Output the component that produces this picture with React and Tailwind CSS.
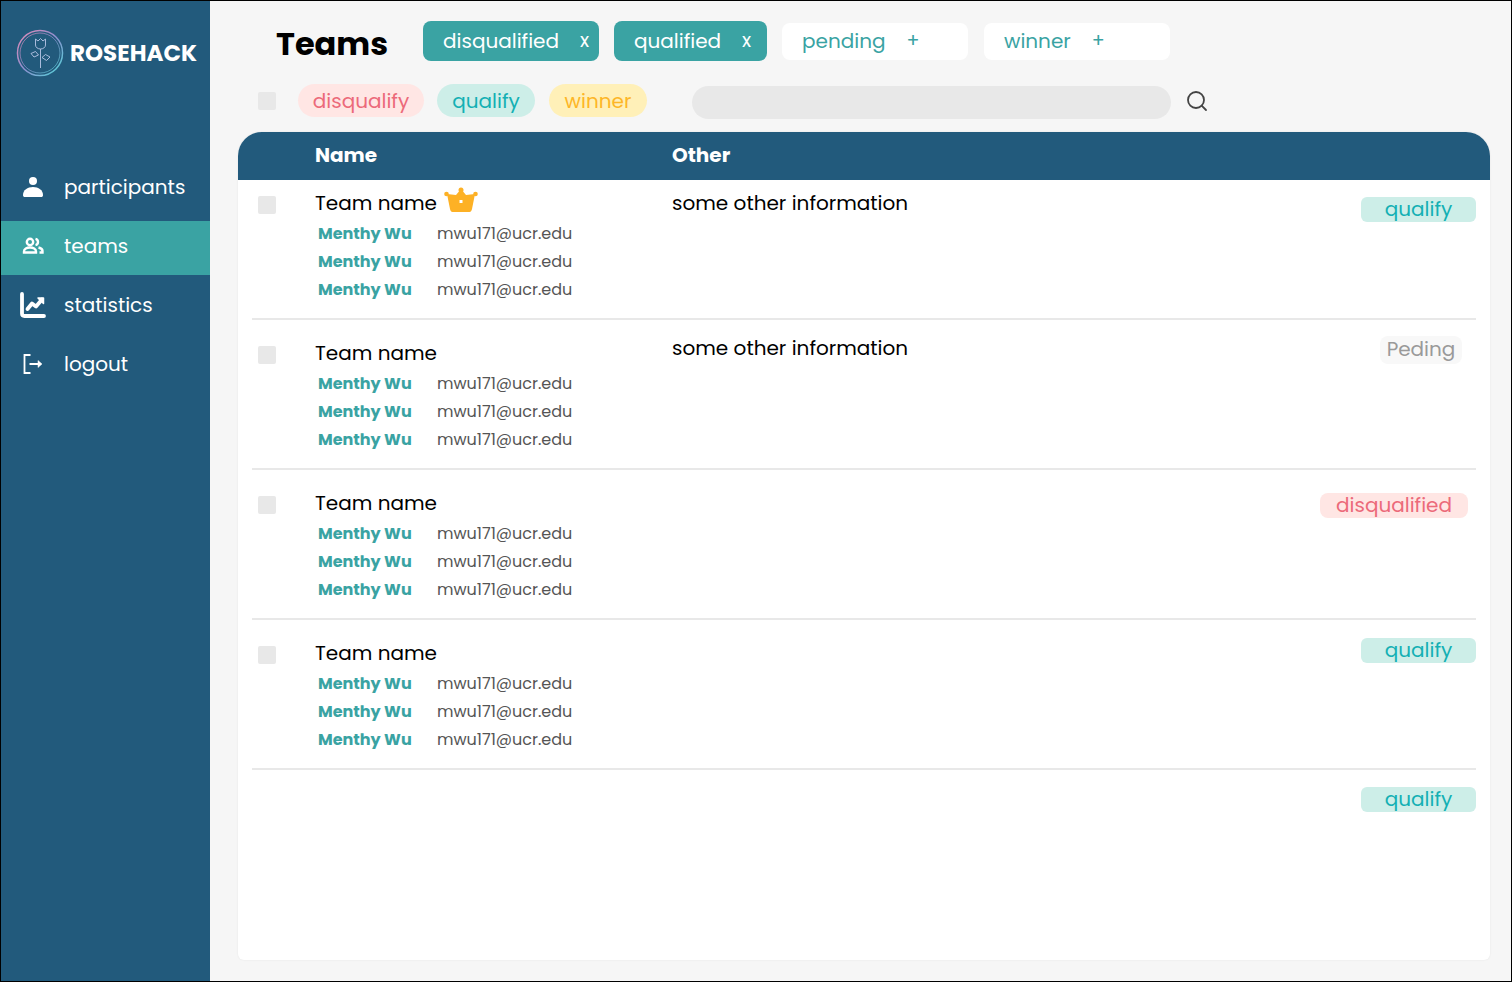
import React from "react";
import { Search } from "lucide-react";

const navItems = [
  { nome: "participants", icon: PersonIcon },
  { nome: "teams", icon: TeamsIcon, ativo: true },
  { nome: "statistics", icon: ChartIcon },
  { nome: "logout", icon: LogoutIcon },
];

const statusStyle = {
  qualify: "w-[115px] h-[25px] pb-[1px] bg-[#cdeee8] text-[#14b0b4] rounded-[6px]",
  pending: "w-[82px] h-[28px] pb-[3px] mr-[14px] bg-[#f8f8f8] text-[#9a9a9a] rounded-[8px]",
  disqualified: "w-[148px] h-[25px] pb-[1px] mr-[8px] bg-[#ffe6e4] text-[#ec6a7a] rounded-[8px]",
};

const teams = [
  { crown: true, other: true, status: "qualify", label: "qualify", statusTop: "mt-[7px]", otherTop: "mt-0", first: true },
  { other: true, status: "pending", label: "Peding", statusTop: "-mt-[4px]", otherTop: "-mt-[5px]" },
  { status: "disqualified", label: "disqualified", statusTop: "mt-[3px]" },
  { status: "qualify", label: "qualify", statusTop: "-mt-[2px]" },
];

function PersonIcon() {
  return (
    <svg width="22" height="22" viewBox="0 0 22 22" fill="white">
      <circle cx="11" cy="5" r="4" />
      <path d="M1 19c0-5 4.500-8 10-8s10 3 10 8c0 1.400-.7 2-2 2H3c-1.300 0-2-.6-2-2z" />
    </svg>
  );
}

function TeamsIcon() {
  return (
    <svg width="22" height="18" viewBox="0 0 22 18" fill="none" stroke="white" strokeWidth="2.400">
      <circle cx="8" cy="5" r="3.200" />
      <path d="M2 15.500v-1c0-2.500 2.800-4 6-4s6 1.500 6 4v1z" fill="none" />
      <path d="M13.500 1.800a3.300 3.300 0 0 1 0 6.400" />
      <path d="M16.500 10.500c2.500.6 4 1.800 4 3.600v1.400h-3" />
    </svg>
  );
}

function ChartIcon() {
  return (
    <svg width="26" height="26" viewBox="0 0 26 26" fill="none" stroke="white" strokeLinecap="round" strokeLinejoin="round">
      <path d="M2 2v19.500c0 1.500 1 2.500 2.500 2.500H24" strokeWidth="3.800" />
      <path d="M7.500 17l4.500-5.500 4 3 6-7" strokeWidth="3.800" />
      <path d="M18 6h5.500v5.500z" fill="white" strokeWidth="1.500" />
    </svg>
  );
}

function LogoutIcon() {
  return (
    <svg width="22" height="22" viewBox="0 0 22 22" fill="none" stroke="white" strokeWidth="1.800">
      <path d="M8.500 2H2.500v18h6" />
      <path d="M7.500 11h10" strokeWidth="2" />
      <path d="M16 7.500l4 3.500-4 3.500z" fill="white" strokeWidth="0.500" />
    </svg>
  );
}

function Logo() {
  return (
    <svg width="48" height="48" viewBox="0 0 48 48" fill="none">
      <defs>
        <linearGradient id="anel" x1="0" y1="0" x2="1" y2="1">
          <stop offset="0" stopColor="#e58bb5" />
          <stop offset="0.5" stopColor="#8f8fd0" />
          <stop offset="1" stopColor="#4fd8d8" />
        </linearGradient>
      </defs>
      <circle cx="24" cy="24" r="22.500" stroke="url(#anel)" strokeWidth="1.500" />
      <circle cx="24" cy="24" r="20" stroke="url(#anel)" strokeWidth="1" opacity="0.7" />
      <g stroke="#b9c6e6" strokeWidth="0.900">
        <path d="M19.500 10l2.500 2 2.500-2.500 2.500 2.500 2.500-2v6c0 2.500-2.500 4-5 4s-5-1.500-5-4z" />
        <path d="M24.500 20V39" />
        <path d="M15 24.500l4.500-2 3 3.500-4.500 2z" />
        <path d="M34 28l-4.500-2.500-3.500 3 4.500 3z" />
      </g>
    </svg>
  );
}

function Crown() {
  return (
    <svg width="34" height="26" viewBox="0 0 34 26" fill="#fdb125">
      <circle cx="17" cy="3" r="2.500" />
      <circle cx="2.500" cy="7" r="2.300" />
      <circle cx="31.500" cy="7" r="2.300" />
      <path d="M17 2l5 6 9-1-3 15c-.3 1.300-1 3-2.500 3h-17C7 25 6.300 23.300 6 22L3 7l9 1z" />
      <rect x="15.500" y="13" width="3" height="3" fill="white" />
    </svg>
  );
}

function Checkbox({ className = "" }) {
  return <div className={`w-[18px] h-[18px] shrink-0 bg-[#e8e8e8] rounded-[2px] ${className}`} />;
}

function ChipAtivo({ nome, largura }) {
  return (
    <div className={`${largura} h-[40px] flex items-center gap-[21px] pl-[20px] bg-[#3aa3a3] rounded-[8px] text-white text-[20px]`}>
      <span>{nome}</span>
      <span className="text-[19px]">x</span>
    </div>
  );
}

function ChipInativo({ nome }) {
  return (
    <div className="w-[186px] h-[37px] flex items-center gap-[21px] pl-[20px] bg-white rounded-[8px] text-[#3aa3a3] text-[20px]">
      <span>{nome}</span>
      <span className="text-[19px]">+</span>
    </div>
  );
}

function Status({ tipo, label, top }) {
  return (
    <div className={`ml-auto shrink-0 flex items-center justify-center text-[20px] ${statusStyle[tipo]} ${top}`}>
      {label}
    </div>
  );
}

function TeamRow({ team }) {
  return (
    <div className={`flex mx-[14px] border-b-2 border-[#e8e8e8] ${team.first ? "h-[140px] pt-[10px]" : "h-[150px] pt-[20px]"}`}>
      <div className="w-[63px] pl-[6px] pt-[6px]">
        <Checkbox />
      </div>
      <div className="w-[357px]">
        <div className="flex items-center h-[26px] text-[20px] text-black">
          <span>Team name</span>
          {team.crown && <span className="ml-[7px] -mt-[6px]"><Crown /></span>}
        </div>
        <div className="mt-[4px] flex flex-col pl-[3px]">
          {[0, 1, 2].map((i) => (
            <div key={i} className="flex items-center h-[28px] text-[16px]">
              <span className="w-[119px] font-bold text-[#3aa3a3]">Menthy Wu</span>
              <span className="text-[#555555]">mwu171@ucr.edu</span>
            </div>
          ))}
        </div>
      </div>
      {team.other && (
        <div className={`text-[20px] leading-[26px] text-black ${team.otherTop}`}>some other information</div>
      )}
      <Status tipo={team.status} label={team.label} top={team.statusTop} />
    </div>
  );
}

export default function App() {
  return (
    <div className="w-[1512px] h-[982px] flex border border-black bg-[#f6f6f6] font-['Poppins','Inter',sans-serif]">
      <aside className="w-[209px] shrink-0 bg-[#225a7c] text-white">
        <div className="flex items-center h-[50px] mt-[27px] pl-[15px] gap-[6px]">
          <Logo />
          <span className="font-bold text-[23px]">ROSEHACK</span>
        </div>
        <nav className="mt-[84px] flex flex-col gap-[5px]">
          {navItems.map((item) => {
            const Icone = item.icon;
            return (
              <div key={item.nome} className={`flex items-center h-[54px] pb-[4px] ${item.ativo ? "bg-[#3aa3a3]" : ""}`}>
                <div className="w-[63px] flex justify-center">
                  <Icone />
                </div>
                <span className="text-[20px]">{item.nome}</span>
              </div>
            );
          })}
        </nav>
      </aside>

      <main className="flex-1">
        <div className="flex items-center h-[40px] mt-[20px] pl-[66px]">
          <h1 className="w-[147px] pt-[5px] text-[32px] font-bold text-black">Teams</h1>
          <div className="flex items-center gap-[15px]">
            <ChipAtivo nome="disqualified" largura="w-[176px]" />
            <ChipAtivo nome="qualified" largura="w-[153px]" />
            <ChipInativo nome="pending" />
            <div className="ml-[1px]">
              <ChipInativo nome="winner" />
            </div>
          </div>
        </div>

        <div className="flex items-center h-[35px] mt-[23px] pl-[48px]">
          <Checkbox className="-mt-[1px]" />
          <div className="flex items-center self-start ml-[22px]">
            <div className="w-[126px] h-[33px] flex items-center justify-center rounded-full bg-[#ffe6e4] text-[#ec6a7a] text-[20px]">disqualify</div>
            <div className="w-[98px] h-[33px] ml-[13px] flex items-center justify-center rounded-full bg-[#cdeee8] text-[#14b0b4] text-[20px]">qualify</div>
            <div className="w-[98px] h-[33px] ml-[14px] flex items-center justify-center rounded-full bg-[#fff0b8] text-[#fdb627] text-[20px]">winner</div>
          </div>
          <div className="w-[479px] h-[33px] ml-[45px] self-end rounded-full bg-[#e8e8e8]" />
          <Search className="ml-[14px] -mt-[1px] text-[#444444]" size={24} strokeWidth={1.800} />
        </div>

        <section className="ml-[28px] mt-[13px] w-[1252px] h-[828px] bg-white rounded-t-[24px] rounded-b-[6px] shadow-[0_0_2px_rgba(0,0,0,0.08)]">
          <div className="flex items-center h-[48px] pb-[2px] bg-[#225a7c] rounded-t-[24px] text-white text-[20px] font-bold">
            <span className="w-[434px] pl-[77px]">Name</span>
            <span>Other</span>
          </div>
          {teams.map((team, i) => (
            <TeamRow key={i} team={team} />
          ))}
          <div className="flex mx-[14px]">
            <Status tipo="qualify" label="qualify" top="mt-[17px]" />
          </div>
        </section>
      </main>
    </div>
  );
}
